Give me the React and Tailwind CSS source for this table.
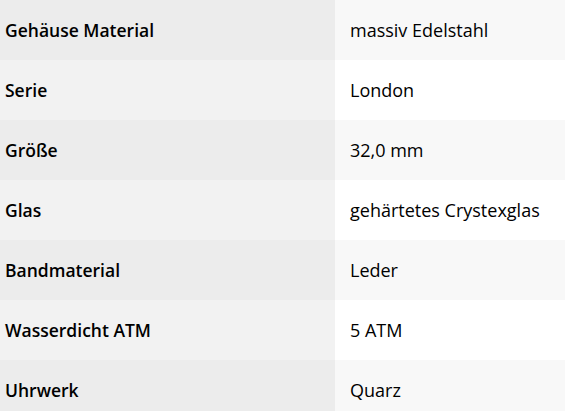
import React from 'react';

const specs = [
  ['Gehäuse Material', 'massiv Edelstahl'],
  ['Serie', 'London'],
  ['Größe', '32,0 mm'],
  ['Glas', 'gehärtetes Crystexglas'],
  ['Bandmaterial', 'Leder'],
  ['Wasserdicht ATM', '5 ATM'],
  ['Uhrwerk', 'Quarz'],
];

function App() {
  return (
    <div className="w-[565px] h-[411px] overflow-hidden bg-white font-['Open_Sans',sans-serif] text-black">
      {specs.map(([label, value], i) => (
        <div key={label} className="flex h-[60px]">
          <div
            className={`w-[335px] shrink-0 flex items-center pl-[5px] text-[17.5px] font-semibold ${
              i % 2 === 0 ? 'bg-[#ececec]' : 'bg-[#f2f2f2]'
            }`}
          >
            {label}
          </div>
          <div
            className={`flex-1 flex items-center pl-[15px] text-[18px] ${
              i % 2 === 0 ? 'bg-[#f8f8f8]' : 'bg-white'
            }`}
          >
            {value}
          </div>
        </div>
      ))}
    </div>
  );
}

export default App;
